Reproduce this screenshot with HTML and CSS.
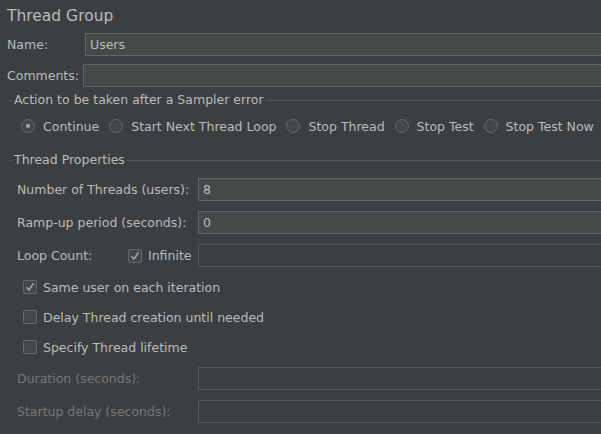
FILE: index.html
```html
<!DOCTYPE html>
<html>
<head>
<meta charset="utf-8">
<link rel="stylesheet" href="styles.css">
</head>
<body>
<div class="panel">
  <div class="title">Thread Group</div>

  <div class="row name-row">
    <label class="lbl name-lbl">Name:</label>
    <div class="field">Users</div>
  </div>

  <div class="row comments-row">
    <label class="lbl comments-lbl">Comments:</label>
    <div class="field"></div>
  </div>

  <div class="group-head g1">
    <span class="dash"></span>
    <span class="gtitle">Action to be taken after a Sampler error</span>
    <span class="gline"></span>
  </div>

  <div class="radios">
    <div class="radio checked"><span class="circle"></span><span>Continue</span></div>
    <div class="radio"><span class="circle"></span><span>Start Next Thread Loop</span></div>
    <div class="radio"><span class="circle"></span><span>Stop Thread</span></div>
    <div class="radio"><span class="circle"></span><span>Stop Test</span></div>
    <div class="radio"><span class="circle"></span><span>Stop Test Now</span></div>
  </div>

  <div class="group-head g2">
    <span class="dash"></span>
    <span class="gtitle">Thread Properties</span>
    <span class="gline"></span>
  </div>

  <div class="row prop first">
    <label class="lbl prop-lbl">Number of Threads (users):</label>
    <div class="field">8</div>
  </div>
  <div class="row prop">
    <label class="lbl prop-lbl">Ramp-up period (seconds):</label>
    <div class="field">0</div>
  </div>
  <div class="row prop">
    <label class="lbl loop-lbl">Loop Count:</label>
    <div class="check-inline">
      <span class="box checked"><svg viewBox="0 0 14 14" width="14" height="14"><path d="M3.5 7.2 L6 10 L10.6 3.2" fill="none" stroke="#a9a9a9" stroke-width="1.4"/></svg></span>
      <span>Infinite</span>
    </div>
    <div class="field disabled"></div>
  </div>

  <div class="checks">
    <div class="check"><span class="box checked"><svg viewBox="0 0 14 14" width="14" height="14"><path d="M3.5 7.2 L6 10 L10.6 3.2" fill="none" stroke="#a9a9a9" stroke-width="1.4"/></svg></span><span>Same user on each iteration</span></div>
    <div class="check"><span class="box"></span><span>Delay Thread creation until needed</span></div>
    <div class="check"><span class="box"></span><span>Specify Thread lifetime</span></div>
  </div>

  <div class="row prop dur">
    <label class="lbl prop-lbl off">Duration (seconds):</label>
    <div class="field disabled"></div>
  </div>
  <div class="row prop">
    <label class="lbl prop-lbl off">Startup delay (seconds):</label>
    <div class="field disabled"></div>
  </div>
</div>
</body>
</html>
```

FILE: styles.css
```css
html, body {
  margin: 0;
  padding: 0;
  background: #3c3f41;
  overflow: hidden;
  width: 601px;
  height: 434px;
}
.panel {
  font-family: "DejaVu Sans", sans-serif;
  font-size: 12.5px;
  color: #bbbbbb;
  display: flex;
  flex-direction: column;
  margin-right: -6px;
}
.title {
  font-size: 15.5px;
  height: 33px;
  line-height: 28px;
  padding-left: 7px;
  padding-top: 2px;
  box-sizing: border-box;
}
.row {
  display: flex;
  align-items: center;
  height: 23px;
}
.lbl {
  flex: none;
  white-space: nowrap;
}
.name-lbl { width: 78px; padding-left: 7px; }
.comments-lbl { width: 76px; padding-left: 7px; }
.comments-row { margin-top: 8px; }
.field {
  flex: 1;
  height: 23px;
  box-sizing: border-box;
  border: 1px solid #646464;
  background: #45494a;
  padding-left: 4px;
  line-height: 21px;
  white-space: nowrap;
}
.field.disabled {
  background: #3c3f41;
  border-color: #555758;
}
.group-head {
  display: flex;
  align-items: center;
  height: 16px;
  line-height: 16px;
}
.g1 { margin-top: 5px; }
.g2 { margin-top: 8px; }
.dash {
  width: 4px;
  height: 1px;
  margin-left: 9px;
  background: #58595a;
}
.gtitle { padding: 0 2px 0 1px; white-space: nowrap; }
.gline {
  flex: 1;
  height: 1px;
  background: #58595a;
}
.radios {
  display: flex;
  align-items: center;
  height: 36px;
  padding-left: 21px;
  gap: 10px;
}
.radio {
  display: flex;
  align-items: center;
  gap: 8px;
  white-space: nowrap;
}
.circle {
  width: 14px;
  height: 14px;
  box-sizing: border-box;
  border: 1px solid #666869;
  border-radius: 50%;
  background: #43494a;
  display: flex;
  align-items: center;
  justify-content: center;
}
.radio.checked .circle::after {
  content: "";
  width: 4px;
  height: 4px;
  border-radius: 50%;
  background: #a9a9a9;
}
.prop { margin-top: 10px; }
.prop.first { margin-top: 10px; }
.prop-lbl { width: 181px; padding-left: 17px; }
.loop-lbl { width: 111px; padding-left: 17px; }
.off { color: #777777; }
.check-inline {
  display: flex;
  align-items: center;
  gap: 6px;
  width: 70px;
  flex: none;
}
.box {
  width: 14px;
  height: 14px;
  box-sizing: border-box;
  border: 1px solid #666869;
  border-radius: 2px;
  background: #43494a;
  flex: none;
  display: block;
  position: relative;
}
.box svg {
  position: absolute;
  left: -1px;
  top: -1px;
}
.checks {
  margin-top: 5px;
  display: flex;
  flex-direction: column;
}
.check {
  height: 30px;
  display: flex;
  align-items: center;
  gap: 6px;
  padding-left: 23px;
  white-space: nowrap;
}
.dur { margin-top: 5px; }
```
